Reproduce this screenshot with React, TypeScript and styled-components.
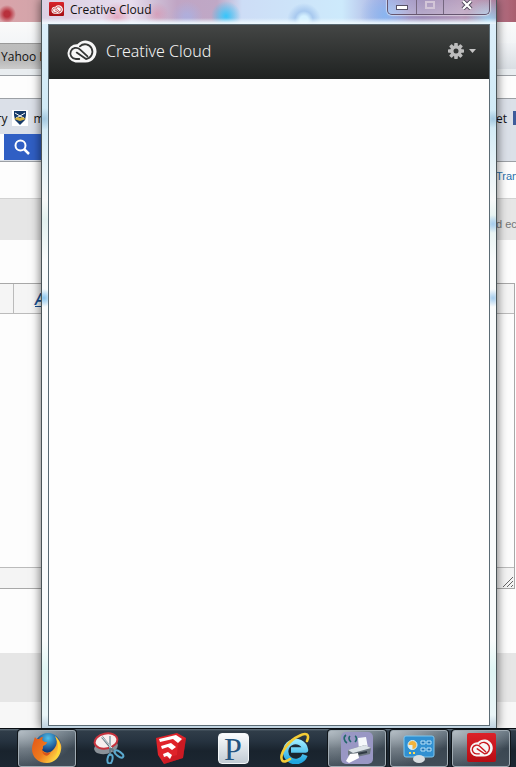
import React from 'react';
import styled, { createGlobalStyle, css } from 'styled-components';

const GlobalStyle = createGlobalStyle`
  *, *::before, *::after { box-sizing: border-box; }
  html, body, #root { height: 100%; margin: 0; }
  body { font-family: "Open Sans", "Noto Sans", sans-serif; font-size: 12px; background: #fdfdfd; overflow: hidden; }
  button, input, textarea { font: inherit; margin: 0; }
  svg { flex: none; }
`;

const Screen = styled.div`
  display: grid;
  grid-template-rows: 1fr 39px;
  height: 100vh;
  min-width: 0;
`;

const Desktop = styled.div`
  position: relative;
  overflow: hidden;
  min-height: 0;
`;

/* Browser behind the window */
const Browser = styled.div`
  display: flex;
  flex-direction: column;
  height: 100%;
  background: #fdfdfd;
`;

const Strip = styled.div<{ $h: number; $bg?: string; $line?: string }>`
  display: grid;
  grid-template-columns: 41px 1fr 20px;
  align-items: center;
  flex: none;
  height: ${(p) => p.$h}px;
  background: ${(p) => p.$bg ?? '#fdfdfd'};
  ${(p) => p.$line && css`border-bottom: 1px solid ${p.$line};`}
`;

const Wallpaper = styled(Strip)`
  background:
    radial-gradient(circle at 7px 14px, #b8303c 0 3px, transparent 9px),
    linear-gradient(90deg, #d9a4aa 0, #d3a5aa 41px, #b9758a 496px, #a85e6e 100%);
`;

const Side = styled.div<{ $right?: boolean }>`
  grid-column: ${(p) => (p.$right ? 3 : 1)};
  grid-row: 1;
  display: flex;
  align-items: center;
  height: 100%;
  overflow: hidden;
  white-space: nowrap;
  color: #111;
`;

const BrowserTab = styled.button`
  grid-column: 1;
  height: 100%;
  padding: 0 0 0 1px;
  border: 0;
  border-top: 1px solid #999;
  background: linear-gradient(#bdbdbd, #bbb 70%, #ccc);
  color: #111;
  text-align: left;
  white-space: nowrap;
  overflow: hidden;
`;

const Bookmarks = styled(Side)`
  justify-content: center;
  gap: 5px;
  padding-top: 4px;
`;

const BookmarksEnd = styled(Side)`
  gap: 6px;
  padding-top: 4px;
`;

const SearchBox = styled.form`
  grid-column: 1;
  display: flex;
  height: 26px;
`;

const SearchInput = styled.input`
  width: 4px;
  padding: 0;
  border: 0;
  background: #fff;
`;

const SearchButton = styled.button`
  flex: 1;
  display: grid;
  place-items: center;
  padding: 0 2px 0 0;
  border: 0;
  background: #305fc4;
`;

const Link = styled.a`
  color: #2c72ab;
  font-family: "Liberation Sans", sans-serif;
  font-size: 11px;
  text-decoration: none;
`;

const Notice = styled(Side)`
  padding-top: 10px;
  color: #777;
  font-family: "Liberation Sans", sans-serif;
  font-size: 11px;
`;

const Editor = styled.div`
  display: flex;
  flex-direction: column;
  flex: 0 0 306px;
  margin-right: 1px;
  border: 1px solid #a8a8a8;
  border-left: 0;
`;

const EditorTools = styled.div`
  display: grid;
  grid-template-columns: 14px 1fr;
  height: 30px;
  background: #f5f5f5;
  border-bottom: 1px solid #bbb;
`;

const ToolCell = styled.div`
  border-right: 1px solid #bbb;
`;

const FormatButton = styled.button`
  justify-self: start;
  padding: 0 0 0 21px;
  border: 0;
  background: none;
  color: #174f91;
  font-size: 16px;
  font-weight: 600;
  font-style: italic;
  text-decoration: underline;
`;

const EditorBody = styled.textarea`
  flex: 1;
  width: 100%;
  border: 0;
  resize: none;
  background: #fdfdfd;
`;

const EditorFoot = styled.div`
  display: flex;
  justify-content: flex-end;
  align-items: flex-end;
  height: 21px;
  background: #f4f4f4;
  border-top: 1px solid #bbb;
`;

/* Floating application window */
const Frame = styled.section`
  position: absolute;
  inset: 0 19px 0 41px;
  display: flex;
  flex-direction: column;
  padding: 0 6px 2px;
  border: solid #4b5558;
  border-width: 0 1px;
  box-shadow: 0 0 9px 1px rgba(0, 0, 0, 0.5);
  background:
    radial-gradient(circle at 2px 298px, #86c4ef 0, transparent 9px),
    radial-gradient(circle at 2px 119px, #a3c8df 0, transparent 11px),
    radial-gradient(circle at 451px 119px, #a3c8df 0, transparent 9px),
    radial-gradient(circle at 451px 224px, #a5cced 0, transparent 9px),
    radial-gradient(circle at 451px 298px, #a5cced 0, transparent 9px),
    linear-gradient(#dceffa 24px, #d0eaf5 120px, #f7f9f9 200px, #e2f1ef 220px, #fafcfc 260px, #fafcfc 640px, #e0f6f4 670px, #eaf6f8 715px, #bdd1df);
`;

const TitleBar = styled.header`
  display: flex;
  align-items: flex-start;
  height: 24px;
  margin: 0 -6px;
  padding-left: 7px;
  background:
    linear-gradient(transparent 18px, rgba(240, 250, 254, 0.9) 23px),
    radial-gradient(circle at 145px 17px, rgba(160, 182, 240, 0.5) 3px, transparent 16px),
    radial-gradient(circle at 75px 17px, rgba(225, 120, 150, 0.5) 0, transparent 15px),
    radial-gradient(circle at 115px 14px, rgba(225, 120, 150, 0.4) 0, transparent 12px),
    radial-gradient(circle at 184px 16px, #35c6fb 0, transparent 15px),
    radial-gradient(circle at 262px 20px, #d5f1ff 4px, #a8c9ef 9px, transparent 17px),
    radial-gradient(circle at 343px 15px, #8ab6f0 0, transparent 25px),
    radial-gradient(circle at 447px 22px, #9cd4f4 0, transparent 24px),
    linear-gradient(90deg, #dcd0e3 0, #e6dced 90px, #cdbcd4 115px, #c0a5c4 135px, #bfa8c6 175px, #cdddf6 200px, #cdeafc 300px, #a7a7dc 345px, #9d8cb8 380px, #b499ba 420px, #ad7b98 100%);
`;

const WindowTitle = styled.h1`
  flex: 1;
  margin: 0 0 0 6px;
  font-size: 12px;
  line-height: 20px;
  font-weight: 400;
  color: #111;
`;

const AppIcon = styled.span`
  display: grid;
  place-items: center;
  width: 15px;
  height: 14px;
  margin-top: 2px;
  border-radius: 1px;
  background: linear-gradient(#d9242b, #a40e14);
`;

const Controls = styled.div`
  display: flex;
  height: 15px;
  margin-right: 6px;
  border: 1px solid #66566f;
  border-top: 0;
  border-radius: 0 0 5px 5px;
  box-shadow: 0 0 1px 1px rgba(255, 255, 255, 0.5);
  overflow: hidden;
`;

const ControlButton = styled.button<{ $w: number }>`
  display: grid;
  place-items: start center;
  width: ${(p) => p.$w}px;
  padding: 0;
  border: 0;
  background: linear-gradient(rgba(255, 255, 255, 0.1), rgba(255, 255, 255, 0.25));
  & + & { border-left: 1px solid #756780; }
`;

const Client = styled.main`
  flex: 1;
  display: flex;
  flex-direction: column;
  border: 1px solid #5b6b74;
  background: #fefefe;
`;

const AppHeader = styled.div`
  display: flex;
  align-items: center;
  height: 54px;
  padding: 0 13px 2px 17px;
  background: linear-gradient(#444645, #1f2221);
`;

const Brand = styled.h2`
  flex: 1;
  margin: 0 0 0 9px;
  color: #f4f4f4;
  font-family: "Noto Sans", "Open Sans", sans-serif;
  font-size: 16px;
  line-height: 24px;
  font-weight: 300;
`;

const SettingsButton = styled.button`
  display: flex;
  align-items: center;
  gap: 5px;
  padding: 0;
  border: 0;
  background: none;
`;

/* Taskbar */
const Taskbar = styled.nav`
  display: flex;
  gap: 4px;
  padding: 1px 6px 0 18px;
  border-top: 1px solid #080d12;
  background: linear-gradient(#66757f 0, #303d49 2px, #263340 12px, #19232d 22px, #1c2732);
  overflow: hidden;
`;

const Task = styled.button<{ $open?: boolean }>`
  flex: 0 0 58px;
  display: grid;
  place-items: start center;
  height: 37px;
  padding: 1px 0 0;
  border: 1px solid transparent;
  border-radius: 3px;
  background: none;
  ${(p) => p.$open && css`
    border-color: #a0abb3;
    box-shadow: 0 0 0 1px #10161b;
    background: radial-gradient(ellipse at 0 0, rgba(205, 213, 219, 0.75), transparent 75%), linear-gradient(#697782, #3b4752 50%, #414d58);
  `}
`;

const CloudMark = ({ w, h, gap }: { w: number; h: number; gap: string }) => (
  <svg width={w} height={h} viewBox="0 0 30 23" fill="none" strokeLinecap="round" aria-hidden="true">
    <path d="M9 22.5H19A11 11 0 1 0 10.8 4.2A9.2 9.2 0 0 0 9 22.5Z" fill="#f7f7f7" />
    <g stroke={gap} strokeWidth="1.8">
      <path d="M12.8 19H9.4A5.600 5.600 0 1 1 13.400 9.400L21 16.400" />
      <path d="M13.400 6.300A7.400 7.400 0 1 1 19.600 19L10.200 12.600" />
    </g>
  </svg>
);

const GearIcon = () => (
  <svg width="16" height="16" viewBox="0 0 16 16" aria-hidden="true">
    <g fill="#bdbdbd">
      {[0, 45, 90, 135].map((a) => (
        <rect key={a} x="6.2" y="0" width="3.6" height="16" rx=".7" transform={`rotate(${a} 8 8)`} />
      ))}
      <circle cx="8" cy="8" r="5.8" />
    </g>
    <circle cx="8" cy="8" r="2.5" fill="#343635" />
  </svg>
);

const FirefoxIcon = () => (
  <svg width="32" height="32" viewBox="0 0 32 32" aria-hidden="true">
    <defs>
      <radialGradient id="globe" cx=".5" cy=".2"><stop stopColor="#4fc0ed" /><stop offset="1" stopColor="#123c7c" /></radialGradient>
      <linearGradient id="fox" x2="1" y2=".7"><stop stopColor="#e35418" /><stop offset=".55" stopColor="#ef7b1d" /><stop offset="1" stopColor="#ffe34b" /></linearGradient>
    </defs>
    <circle cx="17" cy="14" r="13" fill="url(#globe)" />
    <path d="M4 5c1 2 2 2 4 2 2-2 3-2 4-2-1 2-1 3 0 4 1 1 3 1 4 1 0 2-2 3-4 4 0 2 0 3-1 4 3 3 7 4 11 0 4-4 5-9 2-14 5 4 7 9 6 14-1 7-7 13-14 13C7 31 1 25 1 17c0-5 2-8 3-12Z" fill="url(#fox)" />
    <path d="M11 19c2 2 5 3 9 1-3 5-7 5-9-1Z" fill="#d9531a" />
    <path d="M24 4c7 6 7 17-1 23 5-8 5-15 1-23Z" fill="#ffd735" />
  </svg>
);

const SnipIcon = () => (
  <svg width="32" height="32" viewBox="0 0 32 32" fill="none" aria-hidden="true">
    <ellipse cx="13" cy="15" rx="12" ry="7" fill="#8b9299" transform="rotate(-12 13 15)" />
    <ellipse cx="13" cy="9" rx="11.5" ry="7.5" fill="#f7eeee" stroke="#c6323d" strokeWidth="2" transform="rotate(-12 13 9)" />
    <path d="m9 5 14 17M17 4v20" stroke="#667984" strokeWidth="2" />
    <path d="m9 5 10 11M17 4v12" stroke="#dbe4e8" />
    <ellipse cx="17" cy="27" rx="2.5" ry="4.5" stroke="#5ba9ce" strokeWidth="2" transform="rotate(10 17 27)" />
    <ellipse cx="26" cy="22" rx="2.3" ry="5" stroke="#5ba9ce" strokeWidth="2" transform="rotate(-55 26 22)" />
  </svg>
);

const SketchupIcon = () => (
  <svg width="32" height="32" viewBox="0 0 32 32" aria-hidden="true">
    <path d="M1 6 22 1l9 5-3 20-19 6-6-9Z" fill="#df232a" />
    <path d="m23 11 8-5-3 20-19 6-1-5 14-4Z" fill="#b80f1a" opacity=".45" />
    <path d="m4 7 17-4 6 4-4 4-5-4-13 3ZM6 14l10-3 5 4-4 3-4-3-6 2ZM8 22l5-2 4 3-2 4-3-3-3 1Z" fill="#fff" />
  </svg>
);

const LetterIcon = styled.span`
  display: grid;
  place-items: center;
  width: 31px;
  height: 31px;
  margin-top: 1px;
  border: 1px solid #f3f6f8;
  border-radius: 4px;
  background: linear-gradient(#fafcfe, #c1cbd4);
  color: #235480;
  font: 32px/26px "Liberation Serif", serif;
`;

const ExplorerIcon = () => (
  <svg width="32" height="32" viewBox="0 0 32 32" fill="none" aria-hidden="true">
    <defs><linearGradient id="ie" y2="1" x2="0"><stop stopColor="#99eaff" /><stop offset="1" stopColor="#20a5df" /></linearGradient></defs>
    <path d="M26 23A10 10 0 1 1 26.5 18H12" stroke="url(#ie)" strokeWidth="5.5" strokeLinejoin="round" />
    <path d="M28 9C31 2 27 0 20 4 10 8 0 22 3 28c1 3 5 1 8-1" stroke="#f3cb36" strokeWidth="2.6" strokeLinecap="round" />
  </svg>
);

const PrinterIcon = () => (
  <svg width="32" height="32" viewBox="0 0 32 32" fill="none" aria-hidden="true">
    <rect width="32" height="32" rx="5" fill="#9997c4" />
    <path d="m17 6 8-1 2 11-9 2Z" fill="#f5f8fa" />
    <path d="m7 18 17-5 6 3-1 6-18 4-4-3Z" fill="#6d7780" />
    <path d="m7 18 17-5 6 3-18 5Z" fill="#dce3e7" />
    <path d="m11 23 15-3" stroke="#303a43" strokeWidth="2" />
    <path d="m9 22 8-1 1 5-10 5-3-2Z" fill="#fff" />
    <path d="M5 3c-3 2-2 6 1 8M9 4c-2 2-1 4 1 6M14 4c2 1 2 4 0 6" stroke="#23686b" strokeWidth="1.6" />
  </svg>
);

const PanelIcon = () => (
  <svg width="32" height="32" viewBox="0 0 32 32" fill="none" aria-hidden="true">
    <rect x="1" y="4" width="30" height="21" rx="2" fill="#3190d1" stroke="#80c6ec" />
    <circle cx="9.5" cy="13" r="4.5" fill="#f1b33c" stroke="#d8f0fa" />
    <path d="M9.500 13H5A4.500 4.500 0 0 0 9.500 17.500Z" fill="#d8f0fa" />
    <path d="M18 9h4v3h-4zM24 9h4v3h-4zM18 16h4v3h-4zM24 16h4v3h-4z" fill="#1e72b4" stroke="#b9e4fa" />
    <path d="M6 21h2M10 21h2" stroke="#ffdd56" strokeWidth="2" />
    <ellipse cx="16" cy="27" rx="6" ry="4" fill="#d7dde0" />
  </svg>
);

const CloudTile = styled.span`
  display: grid;
  place-items: center;
  width: 29px;
  height: 29px;
  margin-top: 1px;
  border-radius: 2px;
  background: linear-gradient(#dc2229, #b70c13);
`;

export default function App() {
  return (
    <>
      <GlobalStyle />
      <Screen>
        <Desktop>
          <Browser>
            <Wallpaper $h={22} />
            <Strip $h={21} $bg="linear-gradient(#fafafa, #f3f5f7)" />
            <Strip $h={26} $bg="linear-gradient(#f1f3f6, #d9dee3)"><BrowserTab>Yahoo M</BrowserTab></Strip>
            <Strip $h={7} $bg="#e9edf0" $line="#9ca0a5" />
            <Strip $h={23} $line="#9ca0a5" />
            <Strip $h={34} $bg="#dbe0e8">
              <Bookmarks>
                <span>ry</span>
                <svg width="16" height="16" viewBox="0 0 16 16" aria-hidden="true">
                  <path fill="#fff" d="M0 0h16v16H0z" /><path d="M2 1h12v4l-1 5-5 5-5-5-1-5Z" fill="#173b69" />
                  <path d="m3 3 5 3 5-3M4 8l4-2 4 2" fill="none" stroke="#fff" /><path d="m2 9 4-2 2 1 2-1 4 2-6 2Z" fill="#d7b43c" />
                </svg>
                <span>m</span>
              </Bookmarks>
              <BookmarksEnd $right>
                <span>et</span>
                <svg width="14" height="14" viewBox="0 0 14 14" aria-hidden="true"><path fill="#3d5c9b" d="M0 0h14v14H0z" /></svg>
              </BookmarksEnd>
            </Strip>
            <Strip $h={29} $bg="#dbe0e8" $line="#9ca0a5">
              <SearchBox>
                <SearchInput aria-label="Search" />
                <SearchButton type="button" aria-label="Run search">
                  <svg width="16" height="16" viewBox="0 0 16 16" fill="none" stroke="#fff" strokeWidth="2" aria-hidden="true"><circle cx="6.5" cy="6.5" r="5" /><path d="m10 10 5 5" strokeWidth="2.5" /></svg>
                </SearchButton>
              </SearchBox>
            </Strip>
            <Strip $h={28}><Side $right><Link href="#translate">Tran</Link></Side></Strip>
            <Strip $h={8} />
            <Strip $h={42} $bg="linear-gradient(#d2d2d2 1px, #e6e6e6 1px)"><Notice $right>d ec</Notice></Strip>
            <Strip $h={43} />
            <Editor>
              <EditorTools><ToolCell /><FormatButton>A</FormatButton></EditorTools>
              <EditorBody aria-label="Message" />
              <EditorFoot>
                <svg width="12" height="12" viewBox="0 0 12 12" stroke="#666" aria-hidden="true"><path d="M1 11 11 1M5 11l6-6M9 11l2-2" /></svg>
              </EditorFoot>
            </Editor>
            <Strip $h={64} />
            <Strip $h={49} $bg="#e6e6e6" />
            <Strip $h={26} $bg="#f7f7f7" />
          </Browser>
          <Frame aria-label="Creative Cloud">
            <TitleBar>
              <AppIcon><CloudMark w={12} h={9} gap="#c01a20" /></AppIcon>
              <WindowTitle>Creative Cloud</WindowTitle>
              <Controls>
                <ControlButton $w={28} aria-label="Minimize"><svg width="12" height="10" viewBox="0 0 12 10" aria-hidden="true"><rect x=".5" y="5.5" width="11" height="4" fill="#fff" stroke="#565166" /></svg></ControlButton>
                <ControlButton $w={27} aria-label="Maximize" disabled><svg width="12" height="10" viewBox="0 0 12 10" fill="none" aria-hidden="true"><rect x="2" y="2" width="8" height="6" stroke="#d3c6d8" strokeWidth="2" /></svg></ControlButton>
                <ControlButton $w={46} aria-label="Close"><svg width="12" height="10" viewBox="0 0 12 10" fill="none" aria-hidden="true"><path d="m2 1 8 8M10 1 2 9" stroke="#4d4558" strokeWidth="4" /><path d="m2 1 8 8M10 1 2 9" stroke="#fff" strokeWidth="2.3" /></svg></ControlButton>
              </Controls>
            </TitleBar>
            <Client>
              <AppHeader>
                <CloudMark w={31} h={23} gap="#343635" />
                <Brand>Creative Cloud</Brand>
                <SettingsButton aria-label="Settings">
                  <GearIcon />
                  <svg width="7" height="4" viewBox="0 0 7 4" aria-hidden="true"><path d="M0 0h7L3.5 4Z" fill="#c5c5c5" /></svg>
                </SettingsButton>
              </AppHeader>
            </Client>
          </Frame>
        </Desktop>
        <Taskbar aria-label="Taskbar">
          <Task $open aria-label="Firefox"><FirefoxIcon /></Task>
          <Task aria-label="Snipping Tool"><SnipIcon /></Task>
          <Task aria-label="SketchUp"><SketchupIcon /></Task>
          <Task><LetterIcon>P</LetterIcon></Task>
          <Task aria-label="Internet Explorer"><ExplorerIcon /></Task>
          <Task $open aria-label="Printer"><PrinterIcon /></Task>
          <Task $open aria-label="Control Panel"><PanelIcon /></Task>
          <Task $open aria-label="Creative Cloud"><CloudTile><CloudMark w={24} h={18} gap="#c9171e" /></CloudTile></Task>
        </Taskbar>
      </Screen>
    </>
  );
}
